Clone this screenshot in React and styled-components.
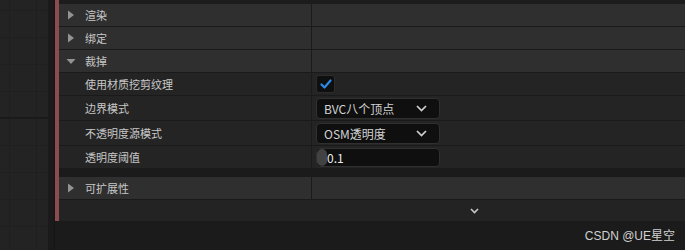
import styled, { createGlobalStyle } from 'styled-components'

const Global = createGlobalStyle`
  html, body { margin: 0; padding: 0; background: #1b1b1b; }
  body { font-family: "Noto Sans CJK SC", "Noto Sans", sans-serif; }
`

const categories = [
  { label: '渲染' },
  { label: '绑定' },
]

export default function App() {
  return (
    <Page>
      <Global />
      <Grid />
      <Gutter />
      <Details>
        <Panel>
          <TopStrip />
          {categories.map((c) => (
            <Category key={c.label} label={c.label} />
          ))}
          <Category label="裁掉" open />
          <Row>
            <Name>使用材质挖剪纹理</Name>
            <Value>
              <Check>
                <svg width="12" height="10" viewBox="0 0 12 10">
                  <path d="M1.5 5.5 L4.5 8.5 L10.5 1.5" fill="none" stroke="#2b8ae8" strokeWidth="2.2" strokeLinecap="round" strokeLinejoin="round" />
                </svg>
              </Check>
            </Value>
          </Row>
          <Row tall>
            <Name>边界模式</Name>
            <Value>
              <Combo>
                <span>BVC八个顶点</span>
                <Chevron />
              </Combo>
            </Value>
          </Row>
          <Row tall>
            <Name>不透明度源模式</Name>
            <Value>
              <Combo>
                <span>OSM透明度</span>
                <Chevron />
              </Combo>
            </Value>
          </Row>
          <Row>
            <Name>透明度阈值</Name>
            <Value>
              <NumberBox>
                <Handle />
                <span>0.1</span>
              </NumberBox>
            </Value>
          </Row>
          <Gap />
          <Category label="可扩展性" />
          <MoreRow>
            <svg width="9" height="6" viewBox="0 0 9 6">
              <path d="M1 1 L4.5 4.5 L8 1" fill="none" stroke="#c8c8c8" strokeWidth="1.6" />
            </svg>
          </MoreRow>
        </Panel>
      </Details>
      <Mark>CSDN @UE星空</Mark>
    </Page>
  )
}

function Category({ label, open }) {
  return (
    <CatRow>
      <CatName>
        <Arrow>
          {open ? (
            <svg width="10" height="10" viewBox="0 0 10 10"><path d="M0.5 3 L9.5 3 L5 8 Z" fill="#939393" /></svg>
          ) : (
            <svg width="10" height="10" viewBox="0 0 10 10"><path d="M2 0.5 L8 5 L2 9.5 Z" fill="#939393" /></svg>
          )}
        </Arrow>
        {label}
      </CatName>
      <Value />
    </CatRow>
  )
}

function Chevron() {
  return (
    <svg width="11" height="7" viewBox="0 0 11 7">
      <path d="M1 1 L5.5 5.5 L10 1" fill="none" stroke="#d0d0d0" strokeWidth="1.7" />
    </svg>
  )
}

const Page = styled.div`
  position: relative;
  display: flex;
  width: 685px;
  height: 250px;
  overflow: hidden;
  background: #1b1b1b;
`
const Grid = styled.div`
  width: 48px;
  flex: none;
  background-color: #232323;
  background-image:
    linear-gradient(to bottom, transparent 117px, #1a1a1a 117px, #1a1a1a 119px, transparent 119px),
    repeating-linear-gradient(to right, transparent 0 9px, #1f1f1f 9px 10px, transparent 10px 27px),
    repeating-linear-gradient(to bottom, transparent 0 10px, #1f1f1f 10px 11px, transparent 11px 27px);
`
const Gutter = styled.div`
  width: 6px;
  flex: none;
  background: #1a1a1a;
  border-right: 1px solid #151515;
`
const Details = styled.div`
  flex: 1;
  display: flex;
  flex-direction: column;
`
const Panel = styled.div`
  border-left: 4px solid #8b4b50;
  display: flex;
  flex-direction: column;
`
const TopStrip = styled.div`
  height: 4px;
  background: #1c1c1c;
`
const Row = styled.div`
  display: grid;
  grid-template-columns: 253px 1fr;
  height: ${(p) => (p.tall ? 24 : 22)}px;
  background: #242424;
  border-bottom: 1px solid #1a1a1a;
  color: #c8c8c8;
  font-size: 11px;
`
const CatRow = styled(Row)`
  background: #2f2f2f;
`
const Name = styled.div`
  display: flex;
  align-items: center;
  padding-left: 26px;
  border-right: 1px solid #1b1b1b;
  white-space: nowrap;
`
const CatName = styled(Name)`
  padding-left: 7px;
`
const Arrow = styled.span`
  display: flex;
  width: 19px;
  align-items: center;
`
const Value = styled.div`
  display: flex;
  align-items: center;
  padding-left: 4px;
`
const Check = styled.div`
  width: 17px;
  height: 16px;
  border-radius: 3px;
  background: #0f0f0f;
  border: 1px solid #2c2c2c;
  display: flex;
  align-items: center;
  justify-content: center;
`
const Combo = styled.div`
  width: 124px;
  height: 21px;
  box-sizing: border-box;
  border: 1px solid #303030;
  border-radius: 4px;
  background: #0f0f0f;
  display: flex;
  align-items: center;
  justify-content: space-between;
  padding: 0 12px 0 7px;
  color: #d2d2d2;
  font-size: 12px;
`
const NumberBox = styled(Combo)`
  height: 19px;
  justify-content: flex-start;
  padding: 0;
  color: #ececec;
`
const Handle = styled.div`
  width: 10px;
  height: 17px;
  border-radius: 5px;
  background: #424242;
`
const Gap = styled.div`
  height: 8px;
  background: #1b1b1b;
`
const MoreRow = styled.div`
  height: 21px;
  background: #232323;
  display: flex;
  align-items: center;
  padding-left: 411px;
`
const Mark = styled.div`
  position: absolute;
  right: 10px;
  bottom: 7px;
  font-size: 12px;
  color: #d0d0d0;
  font-family: "Liberation Sans", "Noto Sans CJK SC", sans-serif;
`
